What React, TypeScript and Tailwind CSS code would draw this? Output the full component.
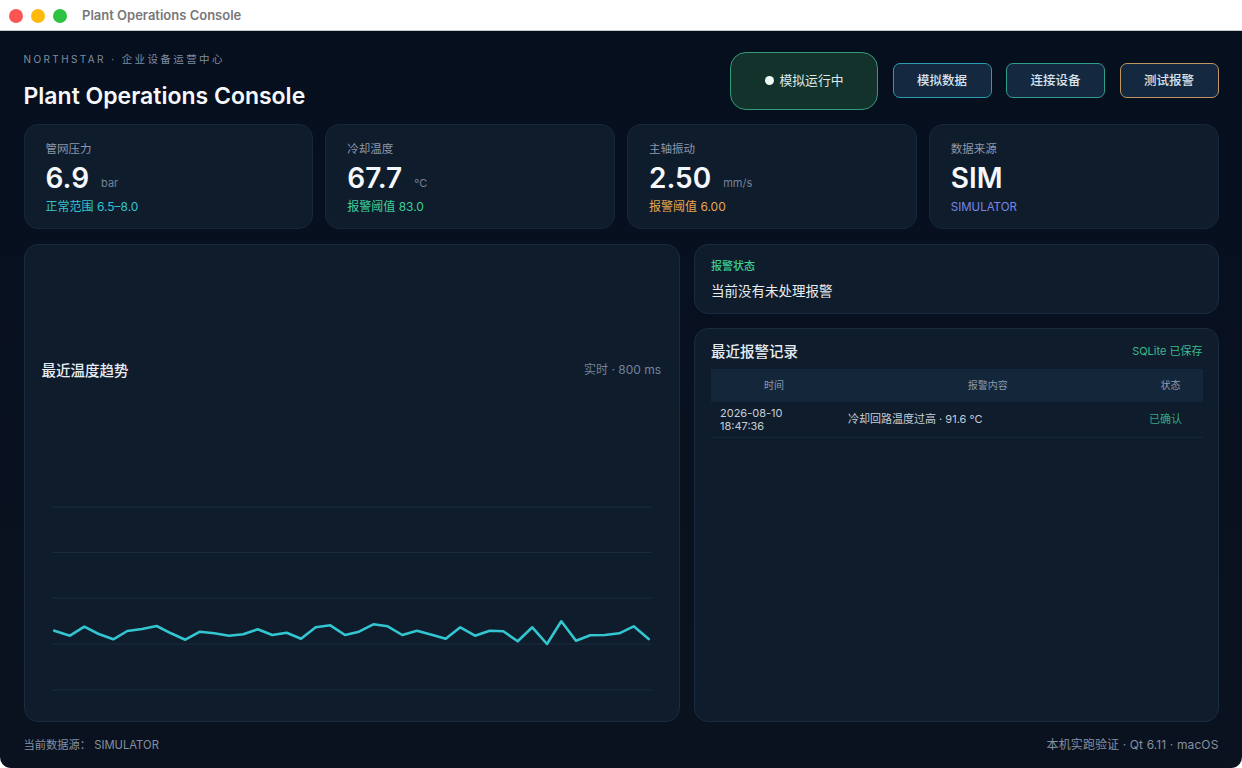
import React from 'react';

const sans = 'font-["Inter","Noto_Sans_CJK_SC",sans-serif]';

const kpis = [
  { label: '管网压力', value: '6.9', unit: 'bar', note: '正常范围 6.5–8.0', noteColor: 'text-[#35c3cf] text-[12px]' },
  { label: '冷却温度', value: '67.7', unit: '°C', note: '报警阈值 83.0', noteColor: 'text-[#3fcf97] text-[12px]' },
  { label: '主轴振动', value: '2.50', unit: 'mm/s', note: '报警阈值 6.00', noteColor: 'text-[#e9a64c] text-[12px]' },
  { label: '数据来源', value: 'SIM', unit: '', note: 'SIMULATOR', noteColor: 'text-[#7c85e6] text-[11.5px]' },
];

const gridLines = [507, 552.5, 598, 644, 690];

const trend =
  '54.3,630.7 70,635.7 84.3,626.7 98.7,634 113.3,639.3 127.3,631 142,629 156.7,626 171,633.3 185.3,639.7 200,631.7 214.3,633.3 229,635.7 243.3,634.3 257.7,629.3 272.3,635 286.7,632.7 301,638.7 315.7,627.3 330.3,625.3 345,635 359,631.7 373.3,624.3 387.7,626.3 402.3,635 417,630.7 431.7,634.7 445.7,638.7 460.3,627.3 475,635.7 489.7,630.7 503.3,631.3 517.7,641.3 532.3,627.3 547,644 561.3,621.3 576,640.7 590.3,635.3 605,635 619.3,633.3 633.7,626.3 648.7,639';

function KpiCard({ label, value, unit, note, noteColor }: (typeof kpis)[number]) {
  return (
    <div className="h-[105px] rounded-[14px] border border-[#17273b] bg-[#0f1c2c] pl-[21px] pt-[16px]">
      <div className="text-[11.5px] leading-[16px] text-[#8b98ab]">{label}</div>
      <div className="mt-[4px] flex h-[34px] items-center">
        <span className="text-[28px] font-semibold leading-[34px] text-[#f4f7fb]">{value}</span>
        {unit && <span className="ml-[12px] mt-[9px] text-[11px] leading-[16px] text-[#75839a]">{unit}</span>}
      </div>
      <div className={`mt-[4px] leading-[16px] ${noteColor}`}>{note}</div>
    </div>
  );
}

function ActionButton({ label, border }: { label: string; border: string }) {
  return (
    <button className={`h-[35px] w-[99px] rounded-[7px] border-[1.5px] bg-[#14293f] pt-[2px] text-[12.5px] font-medium text-[#dbe4ee] ${border}`}>
      {label}
    </button>
  );
}

export default function App() {
  return (
    <div className={`flex h-[768px] w-[1242px] flex-col overflow-hidden bg-white ${sans}`}>
      {/* Title bar */}
      <div className="flex h-[31px] shrink-0 items-center border-b border-[#c9cacc] bg-white pl-[9px] pt-[1px]">
        <span className="h-[14px] w-[14px] rounded-full bg-[#fb5552]" />
        <span className="ml-[8px] h-[14px] w-[14px] rounded-full bg-[#fdb90c]" />
        <span className="ml-[8px] h-[14px] w-[14px] rounded-full bg-[#2ec240]" />
        <span className="ml-[15px] text-[13px] font-semibold text-[#77777a]">Plant Operations Console</span>
      </div>

      <div className="flex flex-1 flex-col rounded-b-[11px] bg-gradient-to-b from-[#060f1e] to-[#0a121f] px-[23.5px]">
        {/* Header */}
        <div className="flex h-[93px] shrink-0 justify-between">
          <div>
            <div className="mt-[21px] text-[10px] leading-[15px] tracking-[0.24em] text-[#7f8da0]">
              NORTHSTAR · <span className="text-[10.5px]">企业设备运营中心</span>
            </div>
            <h1 className="mt-[13px] text-[23px] font-semibold leading-[32px] text-[#f6f8fb]">Plant Operations Console</h1>
          </div>
          <div className="flex items-center gap-[14.5px] pt-[6px]">
            <div className="flex h-[58px] w-[148px] items-center justify-center gap-[6px] rounded-[16px] border-[1.5px] border-[#339a78] bg-[#13322c] text-[12.8px] text-[#dfe9e8]">
              <span className="h-[9px] w-[9px] rounded-full bg-[#eefaf3]" />
              模拟运行中
            </div>
            <ActionButton label="模拟数据" border="border-[#2b9cb0]" />
            <ActionButton label="连接设备" border="border-[#2f9c8e]" />
            <ActionButton label="测试报警" border="border-[#c09660]" />
          </div>
        </div>

        {/* KPI cards */}
        <div className="grid shrink-0 grid-cols-4 gap-[12px]">
          {kpis.map((kpi) => (
            <KpiCard key={kpi.label} {...kpi} />
          ))}
        </div>

        {/* Main */}
        <div className="mt-[15px] flex h-[478px] shrink-0 gap-[14px]">
          <div className="flex w-[656.5px] shrink-0 flex-col rounded-[14px] border border-[#1a2b3f] bg-[#0f1c2c]">
            <div className="mt-[113px] flex h-[24px] items-center justify-between pl-[17px] pr-[18px]">
              <span className="pt-[2px] text-[14.5px] font-medium text-[#e8edf3]">最近温度趋势</span>
              <span className="text-[12px] text-[#75839a]">实时 · 800 ms</span>
            </div>
            <svg className="mt-auto mb-[26px] block" width="654" height="200" viewBox="25 495 654 200">
              {gridLines.map((y) => (
                <line key={y} x1="52" x2="651" y1={y} y2={y} stroke="#1b2c41" strokeWidth="1.2" />
              ))}
              <polyline points={trend} fill="none" stroke="#33c6d0" strokeWidth="2.6" strokeLinejoin="round" strokeLinecap="round" />
            </svg>
          </div>

          <div className="flex min-w-0 flex-1 flex-col gap-[14px]">
            <div className="h-[70px] shrink-0 rounded-[14px] border border-[#1a2b3f] bg-[#0f1c2c] pl-[16px] pt-[13px]">
              <div className="text-[11px] font-medium leading-[16px] text-[#3fcf97]">报警状态</div>
              <div className="mt-[7px] text-[13.5px] leading-[20px] text-[#e8edf3]">当前没有未处理报警</div>
            </div>

            <div className="flex-1 rounded-[14px] border border-[#1a2b3f] bg-[#0f1c2c] pl-[16px] pr-[15px]">
              <div className="flex h-[40px] items-center justify-between">
                <span className="pt-[6px] text-[14.5px] font-medium text-[#e8edf3]">最近报警记录</span>
                <span className="pt-[4px] text-[11px] text-[#3bb98d]">SQLite 已保存</span>
              </div>
              <div className="grid h-[33px] grid-cols-[126px_1fr_64px] items-center bg-[#14263a] text-center text-[10px] text-[#8b98ab]">
                <span>时间</span>
                <span>报警内容</span>
                <span>状态</span>
              </div>
              <div className="grid h-[36px] grid-cols-[137px_1fr_74px] items-center border-b border-[#16263a] text-[11px] text-[#c5ced9]">
                <span className="pl-[9px] leading-[13px]">2026-08-10<br />18:47:36</span>
                <span>冷却回路温度过高 · 91.6 °C</span>
                <span className="text-center text-[#35a883]">已确认</span>
              </div>
            </div>
          </div>
        </div>

        {/* Footer */}
        <div className="flex flex-1 items-center justify-between text-[#8390a3]">
          <span className="text-[11.25px]">当前数据源： SIMULATOR</span>
          <span className="text-[12px] tracking-[0.01em]">本机实跑验证 · Qt 6.11 · macOS</span>
        </div>
      </div>
    </div>
  );
}
